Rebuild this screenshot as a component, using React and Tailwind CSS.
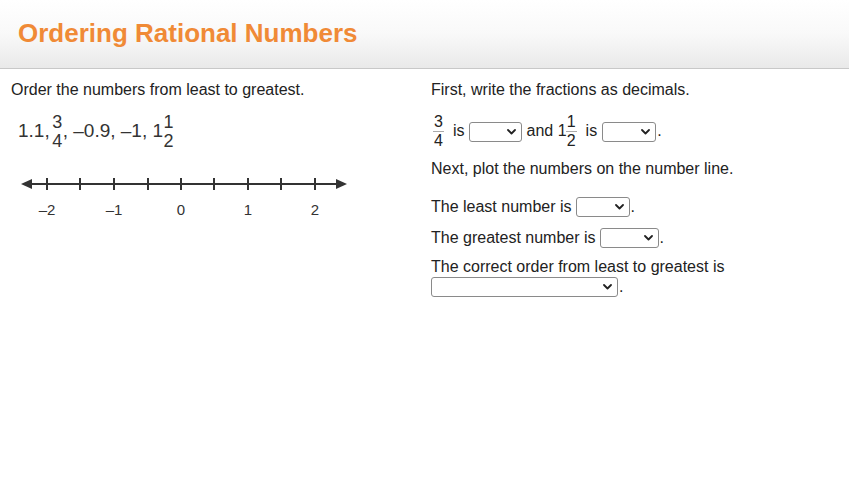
import React from 'react';

const Frac = ({ n, d, bar = '', size = 'text-[16px]' }) => (
    <span className={`inline-flex flex-col items-center align-middle ${size}`}>
        <span className="leading-[18px]">{n}</span>
        <span className={`block w-[11px] h-px ${bar || 'bg-transparent'}`} />
        <span className="leading-[18px]">{d}</span>
    </span>
);

const Drop = ({ w }) => (
    <span
        className="inline-flex items-center justify-end h-[20px] bg-white border border-[#8a8a8a] rounded-[3px] pr-[5px] align-middle"
        style={{ width: w }}
    >
        <svg width="9" height="6" viewBox="0 0 9 6">
            <polyline points="1,1 4.5,4.5 8,1" fill="none" stroke="#222" strokeWidth="1.8" strokeLinecap="round" strokeLinejoin="round" />
        </svg>
    </span>
);

const ticks = [47, 80, 114, 148, 181, 214, 248, 281, 315];
const labels = [[47, '–2'], [114, '–1'], [181, '0'], [248, '1'], [315, '2']];

function NumberLine() {
    return (
        <svg width="360" height="50" viewBox="0 0 360 50" className="block">
            <line x1="28" y1="14" x2="340" y2="14" stroke="#333" strokeWidth="2.2" />
            <polygon points="21,14 32,9 32,19" fill="#333" />
            <polygon points="347,14 336,9 336,19" fill="#333" />
            {ticks.map(x => (
                <line key={x} x1={x} y1="8" x2={x} y2="20" stroke="#333" strokeWidth="2" />
            ))}
            {labels.map(([x, t]) => (
                <text key={x} x={x} y="45" textAnchor="middle" fontSize="15" fill="#333" fontFamily="'Liberation Sans', Arial, sans-serif">{t}</text>
            ))}
        </svg>
    );
}

export default function App() {
    return (
        <div className="w-[849px] h-[482px] bg-white text-[#222] overflow-hidden" style={{ fontFamily: "'Liberation Sans', Arial, sans-serif" }}>
            {/* Header */}
            <header className="h-[69px] border-b border-[#c8c8c8] bg-gradient-to-b from-white via-[#f9f9f9] to-[#e9e9e9] flex items-center pl-[18px] pb-[2px]">
                <h1 className="text-[26px] font-bold text-[#f08a36]">Ordering Rational Numbers</h1>
            </header>

            <main className="flex px-[11px] pt-[12px]">
                {/* Left column */}
                <section className="w-[420px] flex flex-col">
                    <p className="text-[16px] leading-[18px]">Order the numbers from least to greatest.</p>
                    <div className="mt-[13px] ml-[7px] h-[38px] flex items-center text-[19px] text-[#333]">
                        <span>1.1,</span>
                        <span className="ml-[2px]"><Frac n="3" d="4" size="text-[18px]" /></span>
                        <span>, –0.9, –1, 1</span>
                        <Frac n="1" d="2" size="text-[18px]" />
                    </div>
                    <div className="mt-[20px] -ml-[11px]">
                        <NumberLine />
                    </div>
                </section>

                {/* Right column */}
                <section className="flex flex-col text-[16px]">
                    <p className="leading-[18px]">First, write the fractions as decimals.</p>
                    <div className="mt-[13px] h-[38px] flex items-center">
                        <span className="ml-[2px]"><Frac n="3" d="4" bar="bg-[#aaa]" /></span>
                        <span className="ml-[9px]">is</span>
                        <span className="ml-[4px]"><Drop w={53} /></span>
                        <span className="ml-[5px]">and 1</span>
                        <span className="ml-[-1px]"><Frac n="1" d="2" bar="bg-[#aaa]" /></span>
                        <span className="ml-[9px]">is</span>
                        <span className="ml-[5px]"><Drop w={54} /></span>
                        <span className="ml-[1px]">.</span>
                    </div>
                    <p className="mt-[10px] leading-[18px]">Next, plot the numbers on the number line.</p>
                    <div className="mt-[19px] h-[20px] flex items-center gap-[4px]">
                        <span>The least number is</span>
                        <Drop w={54} />
                        <span className="-ml-[3px]">.</span>
                    </div>
                    <div className="mt-[11px] h-[20px] flex items-center gap-[4px]">
                        <span>The greatest number is</span>
                        <Drop w={59} />
                        <span className="-ml-[3px]">.</span>
                    </div>
                    <p className="mt-[10px] leading-[18px]">The correct order from least to greatest is</p>
                    <div className="mt-[1px] h-[20px] flex items-center gap-[4px]">
                        <Drop w={187} />
                        <span className="-ml-[3px]">.</span>
                    </div>
                </section>
            </main>
        </div>
    );
}
